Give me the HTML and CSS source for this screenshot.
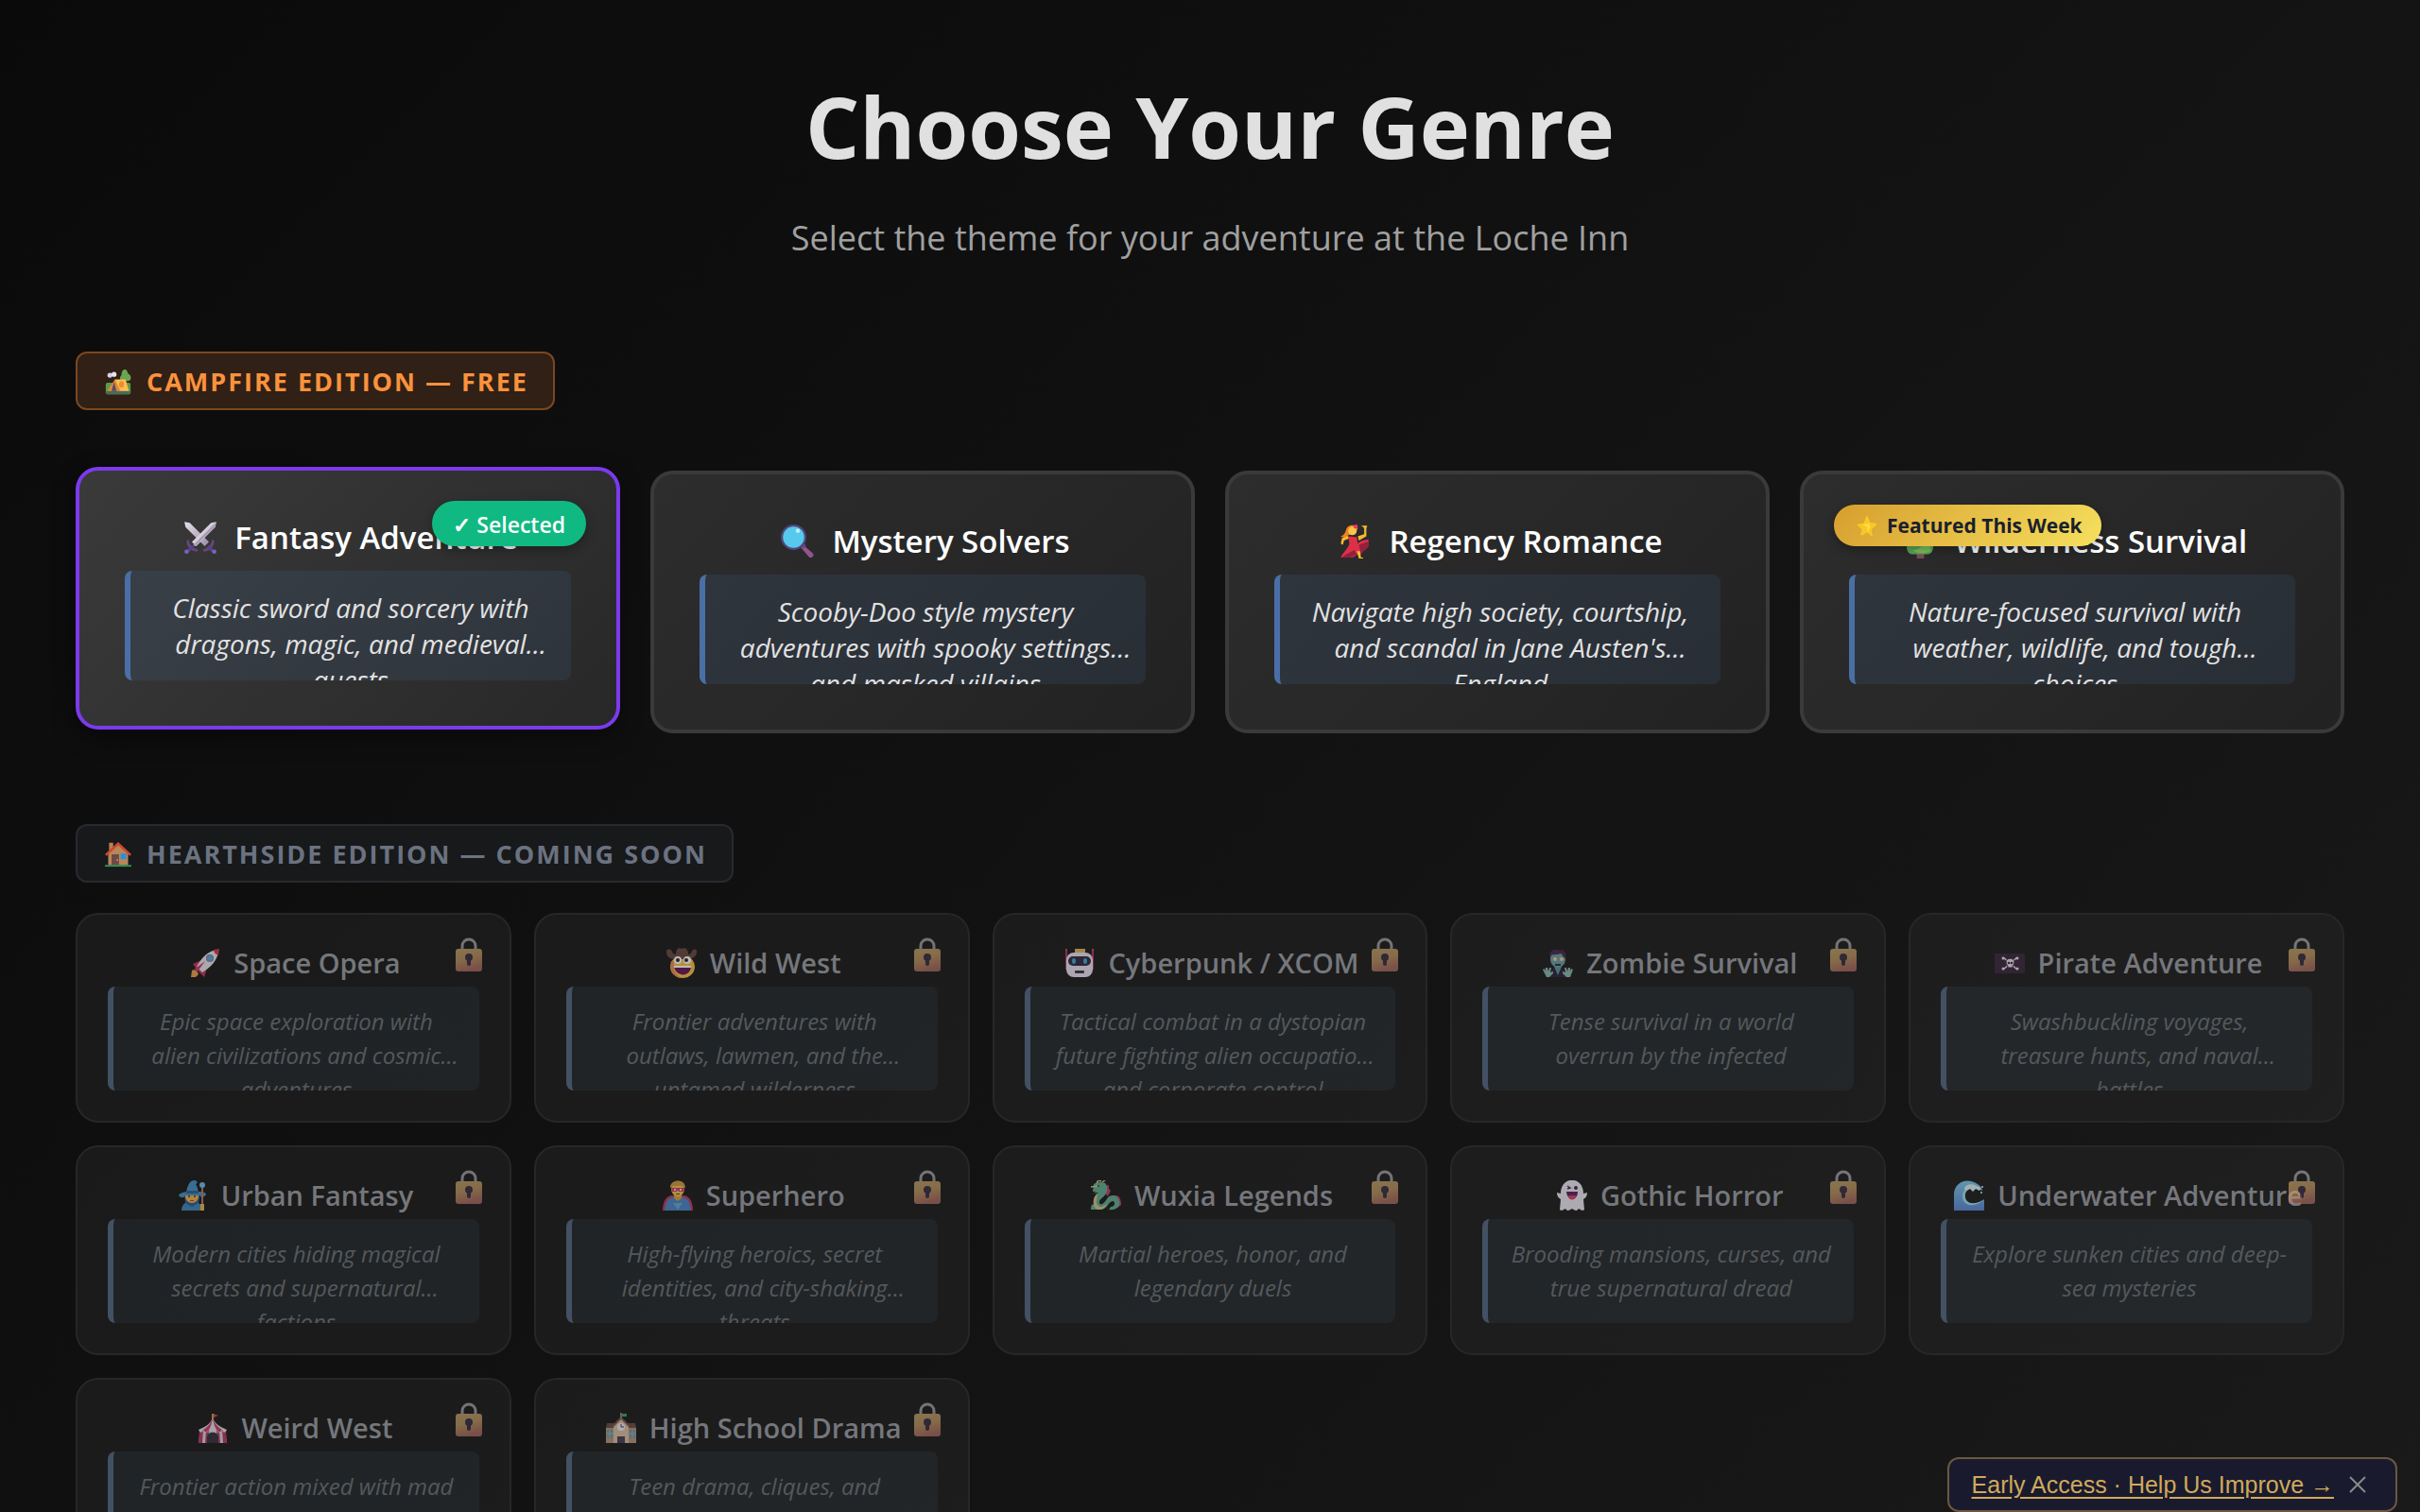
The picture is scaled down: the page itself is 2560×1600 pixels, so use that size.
FILE: index.html
```html
<!DOCTYPE html>
<html lang="en">
<head>
    <meta charset="UTF-8">
    <meta name="viewport" content="width=device-width, initial-scale=1.0">
    <title>Choose Your Genre</title>
    <link rel="stylesheet" href="styles.css">
</head>
<body>
    <!-- Icon sprite -->
    <svg class="sprite" aria-hidden="true">
        <defs>
            <linearGradient id="gold" x1="0" y1="0" x2="0.3" y2="1">
                <stop offset="0" stop-color="#d0b070"/>
                <stop offset="0.5" stop-color="#cda066"/>
                <stop offset="1" stop-color="#b87468"/>
            </linearGradient>
            <linearGradient id="blade" x1="0" y1="0" x2="1" y2="1">
                <stop offset="0" stop-color="#e4dfe8"/>
                <stop offset="1" stop-color="#9a8ba6"/>
            </linearGradient>
            <linearGradient id="sea" x1="0" y1="0" x2="0" y2="1">
                <stop offset="0" stop-color="#7ccbe8"/>
                <stop offset="1" stop-color="#5c86d6"/>
            </linearGradient>
        </defs>
        <symbol id="camp" viewBox="0 0 32 32">
            <rect x="1" y="17" width="30" height="14" rx="2" fill="#5f9a4c"/>
            <rect x="1" y="27" width="30" height="4" rx="2" fill="#4b6b5c"/>
            <path d="M24 1c3 0 3 3 4 5 3 2 4 4 3 7-1 2-3 2-4 2h-5c-4 0-5-4-2-7 0-3 1-7 4-7z" fill="#6aa552"/>
            <path d="M24 14h2v5h-2z" fill="#7a5148"/>
            <circle cx="6" cy="8" r="3" fill="#d8d0e6"/>
            <circle cx="11" cy="7" r="3" fill="#e8e2f0"/>
            <path d="M12 13h13l4 14H17z" fill="#fbbf4e"/>
            <path d="M12 13l7 14H3z" fill="#e08a34"/>
            <path d="M11 16l3 11H8z" fill="#5a4a6a"/>
            <ellipse cx="20" cy="19" rx="3" ry="4" fill="#f08a3c"/>
        </symbol>
        <symbol id="house" viewBox="0 0 32 32">
            <path d="M5 2h5v12H5z" fill="#b98252"/>
            <path d="M4 15L16 4l12 11v14H4z" fill="#b9855a"/>
            <path d="M0 16L16 1l16 15-2 2L16 5 2 18z" fill="#d0472f"/>
            <path d="M8 16h9v13H8z" fill="#6e4a46"/>
            <circle cx="15" cy="23" r="1" fill="#c49a6a"/>
            <path d="M19 15h7v7h-7z" fill="#2f8fd0"/>
            <path d="M0 29h32v2H0z" fill="#2f9e5b"/>
        </symbol>
        <symbol id="swords" viewBox="0 0 32 32">
            <path d="M1 1l5 1 18 18-4 4L2 6z" fill="url(#blade)"/>
            <path d="M31 1l-5 1L8 20l4 4L30 6z" fill="#d5cfdb"/>
            <path d="M30 2L9 23l2 1L30 6z" fill="#a89bb2"/>
            <path d="M5 17c0 5 4 9 9 10l-1 2c-5 0-10-4-10-10zM27 17c0 5-4 9-9 10l1 2c5 0 10-4 10-10z" fill="#66467c"/>
            <path d="M8 23l2 2-5 5-2-2zM24 23l-2 2 5 5 2-2z" fill="#58408c"/>
            <circle cx="3" cy="29" r="2" fill="#7766bb"/>
            <circle cx="29" cy="29" r="2" fill="#7766bb"/>
        </symbol>
        <symbol id="glass" viewBox="0 0 32 32">
            <path d="M21 19l9 8c2 2-1 5-3 4l-8-9z" fill="#92558f"/>
            <path d="M18 19l3-2 3 3-3 3z" fill="#6b4587"/>
            <circle cx="12" cy="12" r="12" fill="#50477d"/>
            <circle cx="12" cy="12" r="10" fill="#57c9ed"/>
            <ellipse cx="16" cy="6" rx="2" ry="2" fill="#bdeeff"/>
        </symbol>
        <symbol id="dancer" viewBox="0 0 32 32">
            <path d="M19 11l6-2V3l-3-2 5 0v10l-7 4z" fill="#f6b92f"/>
            <path d="M24 2l4-1-2 4z" fill="#f6b92f"/>
            <path d="M9 10l-5 3-1 5 2 1 1-4 5-2z" fill="#f6b92f"/>
            <path d="M8 5c1-5 9-6 11-1l-4 5-5 1c-2 2-5 3-7 1 3-1 4-3 5-6z" fill="#ef8220"/>
            <circle cx="14" cy="6" r="4" fill="#fbc547"/>
            <circle cx="17" cy="2" r="2" fill="#ec3a64"/>
            <path d="M10 11l8 1 1 6c4-4 7-3 10-4v6c-3 4-5 4-7 8-4-2-5 3-9 3H3c2-5 7-8 8-13z" fill="#dd3048"/>
            <path d="M20 19l9-3v5c-3 3-5 4-7 7zM8 28l8-4 2 4-6 3H4z" fill="#94203d"/>
            <path d="M18 25h3l1 6h2v1h-4z" fill="#f6b92f"/>
        </symbol>
        <symbol id="tree" viewBox="0 0 32 32">
            <path d="M13 25h7v7h-7z" fill="#7d4b58"/>
            <path d="M16 0c4 0 7 5 6 8 4 2 5 5 4 8 3 2 3 5 2 8-1 3-3 4-5 4H9c-2 0-4-1-5-4-1-3 0-6 2-8-1-3 0-6 4-8-1-3 2-8 6-8z" fill="#5da457"/>
            <path d="M19 17c5 0 8 4 7 8-7 3-14 2-17-1 5 0 9-2 10-7z" fill="#7cc05e"/>
        </symbol>
        <symbol id="star" viewBox="0 0 32 32">
            <path d="M16 1c2 0 3 8 5 10s10 1 10 3-7 6-8 8 3 9 1 10-6-5-8-5-7 6-9 4 2-7 1-9-7-5-7-7 8-1 10-3 3-11 5-11z" fill="#fbc725"/>
            <path d="M16 3l3 10-10 2 8 3-1 9 5-8z" fill="#fee04b"/>
        </symbol>
        <symbol id="rocket" viewBox="0 0 32 32">
            <path d="M2 24c3-2 6 1 7 4l-3 3H1z" fill="#f0a14e"/>
            <path d="M3 17l9-4 5 12-2 6-4-4-4-4z" fill="#c1345d"/>
            <path d="M30 2c0 8-5 17-17 24l-6-6C13 9 21 2 30 2z" fill="#e9e4ee"/>
            <path d="M25 2l6-1-1 7c-3-1-5-3-5-6z" fill="#cc3c59"/>
            <path d="M4 23l12-9-8 11z" fill="#cb3d6e"/>
            <circle cx="21" cy="11" r="4" fill="#7d7896"/>
            <circle cx="21" cy="11" r="3" fill="#5ba7d8"/>
        </symbol>
        <symbol id="cowboy" viewBox="0 0 32 32">
            <ellipse cx="17" cy="20" rx="13" ry="12" fill="#f5c24a"/>
            <path d="M5 14c-2 8 1 16 10 18C9 27 6 22 8 14z" fill="#e58a63"/>
            <path d="M0 3c2-3 6-1 7 3l3 1C10 1 13-1 16 1c4-2 7 0 7 6l3-1c1-4 4-6 6-3 1 5-4 9-8 9H8C3 12-1 8 0 3z" fill="#69493f"/>
            <circle cx="12" cy="13" r="4" fill="#fff"/>
            <circle cx="22" cy="13" r="4" fill="#fff"/>
            <circle cx="12" cy="13" r="2" fill="#30232c"/>
            <circle cx="21" cy="13" r="2" fill="#30232c"/>
            <path d="M8 19h18c0 13-17 12-18 0z" fill="#6d1554"/>
            <path d="M8 19h18v2H8z" fill="#fff"/>
        </symbol>
        <symbol id="robot" viewBox="0 0 32 32">
            <path d="M1 2h2v21H1zM29 2h2v21h-2z" fill="#b2355c"/>
            <circle cx="2" cy="2" r="1" fill="#e0557a"/>
            <circle cx="30" cy="2" r="1" fill="#e0557a"/>
            <path d="M11 1h11v4H11z" fill="#ddb55c"/>
            <rect x="2" y="5" width="28" height="26" rx="8" fill="#e9e1ef"/>
            <rect x="4" y="9" width="24" height="10" rx="5" fill="#332b47"/>
            <ellipse cx="10" cy="14" rx="2" ry="3" fill="#42a5d0"/>
            <ellipse cx="22" cy="14" rx="2" ry="3" fill="#42a5d0"/>
            <rect x="11" y="24" width="10" height="3" rx="1" fill="#403650"/>
        </symbol>
        <symbol id="zombie" viewBox="0 0 32 32">
            <path d="M8 24c4-4 12-4 16 0l2 7H6z" fill="#2c2340"/>
            <path d="M12 20h8l-4 9z" fill="#5d9197"/>
            <ellipse cx="16" cy="12" rx="8" ry="9" fill="#6b9ea5"/>
            <path d="M7 9c0-6 6-9 12-6l3-3-1 3c4 1 4 5 3 8-3-1-3-4-5-5-5 2-9 0-12 3z" fill="#45294e"/>
            <circle cx="13" cy="12" r="2" fill="#f2c98f"/>
            <circle cx="20" cy="12" r="2" fill="#f2c98f"/>
            <path d="M13 17h6v2h-6z" fill="#2b3340"/>
            <path d="M0 23l2-1 1 3v-4h2l1 4 1-4h2l-1 5 3-1v2l-4 4H4zM32 23l-2-1-1 3v-4h-2l-1 4-1-4h-2l1 5-3-1v2l4 4h4z" fill="#88b9ae"/>
        </symbol>
        <symbol id="pirate" viewBox="0 0 32 32">
            <path d="M0 6h32v21H0z" fill="#3b2740"/>
            <path d="M9 10l15 13M24 10L9 23" stroke="#e5dfe9" stroke-width="1.500"/>
            <circle cx="9" cy="11" r="1.500" fill="#e5dfe9"/>
            <circle cx="24" cy="11" r="1.500" fill="#e5dfe9"/>
            <circle cx="9" cy="22" r="1.500" fill="#e5dfe9"/>
            <circle cx="24" cy="22" r="1.500" fill="#e5dfe9"/>
            <path d="M12 15c0-5 9-5 9 0 0 3-2 3-2 6h-5c0-3-2-3-2-6z" fill="#e5dfe9" stroke="#3b2740" stroke-width="1"/>
            <circle cx="15" cy="16" r="1.300" fill="#3b2740"/>
            <circle cx="18" cy="16" r="1.300" fill="#3b2740"/>
        </symbol>
        <symbol id="mage" viewBox="0 0 32 32">
            <path d="M4 32c0-7 5-10 11-10s11 3 11 10z" fill="#4387b4"/>
            <path d="M7 14h17l-2 10-7 4-7-4z" fill="#2e5f9c"/>
            <ellipse cx="15" cy="17" rx="7" ry="7" fill="#f0b24c"/>
            <path d="M9 12C11 5 12 1 17 0c4 0 5 3 2 4 2 3 2 5 3 8 5 0 8 1 8 3-3 4-6 4-6 1H8c-1 3-5 3-7 0 1-2 3-3 8-4z" fill="#4592c4"/>
            <path d="M9 11h13v3H9z" fill="#31669b"/>
            <circle cx="12" cy="17" r="1" fill="#483043"/>
            <circle cx="18" cy="17" r="1" fill="#483043"/>
            <path d="M13 21h4v1h-4z" fill="#9b5043"/>
            <path d="M25 6h2v26h-2z" fill="#bf765b"/>
            <circle cx="26" cy="5" r="3" fill="#6fbde8"/>
            <path d="M24 25h4v7h-4z" fill="#e5b74e"/>
        </symbol>
        <symbol id="hero" viewBox="0 0 32 32">
            <path d="M0 32c0-10 4-15 9-16h14c5 1 9 6 9 16z" fill="#c23a5d"/>
            <path d="M2 32c1-9 3-13 9-14h10c6 1 8 5 9 14z" fill="#4a86c6"/>
            <path d="M11 24h10l-5 7z" fill="#6ba6d8"/>
            <path d="M12 14h8v5l-4 3-4-3z" fill="#dca23f"/>
            <ellipse cx="16" cy="9" rx="7" ry="8" fill="#efc352"/>
            <path d="M8 8c-1-9 16-11 16 0-3-1-4-3-8-2-3 0-6 0-8 2z" fill="#cf9c43"/>
            <path d="M9 8h14l-1 4h-5l-1-2-1 2h-5z" fill="#d23f66"/>
            <circle cx="13" cy="10" r="1" fill="#fff"/>
            <circle cx="19" cy="10" r="1" fill="#fff"/>
            <path d="M14 14h4v1h-4z" fill="#7c3e38"/>
        </symbol>
        <symbol id="dragon" viewBox="0 0 32 32">
            <path d="M14 6l5-1v4l2 2-3 6-3-3zM22 17c6-3 10 0 10 9l-4 3V21z" fill="#bd3f74"/>
            <path d="M2 12l1-8c3-2 8-3 12-1 3 3 3 7 1 11-3 5-8 6-7 10 2 4 6-1 9-6 4-4 11-2 12 4 2 6-4 10-11 9l2-3c5 0 5-6 2-6-4 0-6 9-12 9H0c0-5 1-5 3-6-1-5 1-9 5-12l-6 1 4-2z" fill="#62ae91"/>
            <path d="M3 25c-1-5 1-9 4-11l-1 7c-1 4 2 8 6 7l5-3c-2 4-5 6-8 6s-6-2-6-6z" fill="#d5c086"/>
            <path d="M6 3l2-3 3 1M12 2l3-2M0 7l7-1" stroke="#dcc588" stroke-width="1.500" fill="none"/>
            <circle cx="8" cy="6" r="1" fill="#2b3c40"/>
        </symbol>
        <symbol id="ghost" viewBox="0 0 32 32">
            <path d="M4 14C4-5 28-5 28 14l4-1c0 4-2 6-4 7l1 11c-2 2-4 0-6-1-2 3-4 2-7 0-3 2-5 3-7 0-2 1-4 3-6 1l1-11c-2-1-4-3-4-7z" fill="#ece6f2"/>
            <path d="M11 6l3 2-3 1" stroke="#3c2d48" stroke-width="1.500" fill="none"/>
            <circle cx="20" cy="8" r="2" fill="#3c2d48"/>
            <path d="M10 12h12c0 10-11 11-12 0z" fill="#612060"/>
            <path d="M12 16h8c0 6-8 6-8 0z" fill="#d44166"/>
        </symbol>
        <symbol id="wave" viewBox="0 0 32 32">
            <path d="M0 32V15C0 2 14-4 25 4c3 2 5 4 5 7-3-1-6-3-11-3-9 0-11 11-4 16 6 3 12-1 17-4v12z" fill="url(#sea)"/>
            <path d="M9 17c0-9 8-14 17-9-9-1-15 3-14 10 1 6 8 9 19 3-10 9-22 6-22-4z" fill="#9fdcf1"/>
            <path d="M11 9c1-5 8-6 13-3 4 1 5 3 3 5l-4-2-3 3-3-3-4 2z" fill="#d9f1f7"/>
            <circle cx="30" cy="7" r="1" fill="#d9f1f7"/>
            <circle cx="29" cy="13" r="1" fill="#d9f1f7"/>
        </symbol>
        <symbol id="circus" viewBox="0 0 32 32">
            <path d="M15 1h2v7h-2z" fill="#d69d47"/>
            <path d="M17 1l5 2-5 2z" fill="#ca3f61"/>
            <path d="M3 17h26l2 15H1z" fill="#d9d2df"/>
            <path d="M2 18h4l-1 14H1zM26 18h4l1 14h-4zM9 18h3l-1 14H8zM20 18h3l1 14h-3z" fill="#b63a63"/>
            <path d="M16 6c3 6 8 9 15 12-2 4-4 3-5 0-3 4-5 3-6 0-2 3-6 3-8 0-1 3-3 4-6 0-1 3-3 4-5 0C8 15 13 12 16 6z" fill="#e3dce9"/>
            <path d="M16 6c-1 5-2 9-4 12-2 3-4 3-6 0 5-3 8-7 10-12zM16 6c1 5 2 9 4 12 2 3 4 3 6 0-5-3-8-7-10-12z" fill="#cc4265"/>
            <path d="M10 32V26c0-7 12-7 12 0v6z" fill="#3a3042"/>
        </symbol>
        <symbol id="school" viewBox="0 0 32 32">
            <path d="M0 15h32v17H0z" fill="#b99378"/>
            <path d="M1 11h30l1 5H0z" fill="#6a4b46"/>
            <path d="M8 14l8-8 8 8v18H8z" fill="#d9bfa4"/>
            <path d="M6 14L16 4l10 10-2 1-8-8-8 8z" fill="#7b5750"/>
            <path d="M15 0h2v6h-2z" fill="#8b7a7a"/>
            <path d="M17 1h5v3h-5z" fill="#3f9f6a"/>
            <circle cx="16" cy="15" r="4" fill="#eee8ef"/>
            <path d="M16 12v3h3" stroke="#4b3c4b" stroke-width="1" fill="none"/>
            <path d="M1 18h6v9H1zM25 18h6v9h-6z" fill="#5d9db5"/>
            <path d="M4 18v9M1 22h6M28 18v9M25 22h6" stroke="#c7a488" stroke-width="1"/>
            <path d="M12 25h8v7h-8z" fill="#4a3f56"/>
        </symbol>
        <symbol id="lock" viewBox="0 0 28 36">
            <path d="M7 14V9a7 7 0 0 1 14 0v5" stroke="#b0adb6" stroke-width="3" fill="none"/>
            <rect x="0" y="12" width="28" height="24" rx="3" fill="url(#gold)"/>
            <circle cx="14" cy="21" r="4" fill="#3d3148"/>
            <path d="M12 21h4v7a2 2 0 0 1-4 0z" fill="#3d3148"/>
        </symbol>
    </svg>

    <header class="page-header">
        <h1>Choose Your Genre</h1>
        <p>Select the theme for your adventure at the Loche Inn</p>
    </header>

    <main>
        <section class="tier">
            <h2 class="tier-label tier-free"><svg class="tier-icon"><use href="#camp"/></svg>Campfire Edition — Free</h2>
            <div class="genre-grid">
                <button class="genre-card selected">
                    <span class="badge badge-selected">✓ Selected</span>
                    <span class="genre-name"><svg class="genre-icon"><use href="#swords"/></svg>Fantasy Adventure</span>
                    <span class="genre-desc">Classic sword and sorcery with dragons, magic, and medieval quests</span>
                </button>
                <button class="genre-card">
                    <span class="genre-name"><svg class="genre-icon"><use href="#glass"/></svg>Mystery Solvers</span>
                    <span class="genre-desc">Scooby-Doo style mystery adventures with spooky settings and masked villains</span>
                </button>
                <button class="genre-card">
                    <span class="genre-name"><svg class="genre-icon"><use href="#dancer"/></svg>Regency Romance</span>
                    <span class="genre-desc">Navigate high society, courtship, and scandal in Jane Austen's England</span>
                </button>
                <button class="genre-card">
                    <span class="badge badge-featured"><svg class="badge-icon"><use href="#star"/></svg>Featured This Week</span>
                    <span class="genre-name"><svg class="genre-icon"><use href="#tree"/></svg>Wilderness Survival</span>
                    <span class="genre-desc">Nature-focused survival with weather, wildlife, and tough choices</span>
                </button>
            </div>
        </section>

        <section class="tier tier-soon">
            <h2 class="tier-label tier-locked"><svg class="tier-icon"><use href="#house"/></svg>Hearthside Edition — Coming Soon</h2>
            <div class="locked-grid">
                <button class="genre-card locked" disabled>
                    <svg class="lock"><use href="#lock"/></svg>
                    <span class="genre-name"><svg class="genre-icon"><use href="#rocket"/></svg>Space Opera</span>
                    <span class="genre-desc">Epic space exploration with alien civilizations and cosmic adventures</span>
                </button>
                <button class="genre-card locked" disabled>
                    <svg class="lock"><use href="#lock"/></svg>
                    <span class="genre-name"><svg class="genre-icon"><use href="#cowboy"/></svg>Wild West</span>
                    <span class="genre-desc">Frontier adventures with outlaws, lawmen, and the untamed wilderness</span>
                </button>
                <button class="genre-card locked" disabled>
                    <svg class="lock"><use href="#lock"/></svg>
                    <span class="genre-name"><svg class="genre-icon"><use href="#robot"/></svg>Cyberpunk / XCOM</span>
                    <span class="genre-desc">Tactical combat in a dystopian future fighting alien occupation and corporate control</span>
                </button>
                <button class="genre-card locked" disabled>
                    <svg class="lock"><use href="#lock"/></svg>
                    <span class="genre-name"><svg class="genre-icon"><use href="#zombie"/></svg>Zombie Survival</span>
                    <span class="genre-desc">Tense survival in a world overrun by the infected</span>
                </button>
                <button class="genre-card locked" disabled>
                    <svg class="lock"><use href="#lock"/></svg>
                    <span class="genre-name"><svg class="genre-icon"><use href="#pirate"/></svg>Pirate Adventure</span>
                    <span class="genre-desc">Swashbuckling voyages, treasure hunts, and naval battles</span>
                </button>
                <button class="genre-card locked" disabled>
                    <svg class="lock"><use href="#lock"/></svg>
                    <span class="genre-name"><svg class="genre-icon"><use href="#mage"/></svg>Urban Fantasy</span>
                    <span class="genre-desc">Modern cities hiding magical secrets and supernatural factions</span>
                </button>
                <button class="genre-card locked" disabled>
                    <svg class="lock"><use href="#lock"/></svg>
                    <span class="genre-name"><svg class="genre-icon"><use href="#hero"/></svg>Superhero</span>
                    <span class="genre-desc">High-flying heroics, secret identities, and city-shaking threats</span>
                </button>
                <button class="genre-card locked" disabled>
                    <svg class="lock"><use href="#lock"/></svg>
                    <span class="genre-name"><svg class="genre-icon"><use href="#dragon"/></svg>Wuxia Legends</span>
                    <span class="genre-desc">Martial heroes, honor, and legendary duels</span>
                </button>
                <button class="genre-card locked" disabled>
                    <svg class="lock"><use href="#lock"/></svg>
                    <span class="genre-name"><svg class="genre-icon"><use href="#ghost"/></svg>Gothic Horror</span>
                    <span class="genre-desc">Brooding mansions, curses, and true supernatural dread</span>
                </button>
                <button class="genre-card locked" disabled>
                    <svg class="lock"><use href="#lock"/></svg>
                    <span class="genre-name"><svg class="genre-icon"><use href="#wave"/></svg>Underwater Adventure</span>
                    <span class="genre-desc">Explore sunken cities and deep-sea mysteries</span>
                </button>
                <button class="genre-card locked" disabled>
                    <svg class="lock"><use href="#lock"/></svg>
                    <span class="genre-name"><svg class="genre-icon"><use href="#circus"/></svg>Weird West</span>
                    <span class="genre-desc">Frontier action mixed with mad science and the occult</span>
                </button>
                <button class="genre-card locked" disabled>
                    <svg class="lock"><use href="#lock"/></svg>
                    <span class="genre-name"><svg class="genre-icon"><use href="#school"/></svg>High School Drama</span>
                    <span class="genre-desc">Teen drama, cliques, and coming-of-age challenges</span>
                </button>
            </div>
        </section>
    </main>

    <div class="feedback">
        <a href="#feedback">Early Access · Help Us Improve →</a>
        <button class="feedback-close" aria-label="Close">
            <svg viewBox="0 0 18 18"><path d="M1 1l16 16M17 1L1 17" stroke="#8a8a8a" stroke-width="2"/></svg>
        </button>
    </div>
</body>
</html>
```

FILE: styles.css
```css
* {
    box-sizing: border-box;
}

body {
    margin: 0;
    padding: 66px 80px 64px;
    min-height: 100vh;
    font-family: "Open Sans", "Noto Sans", sans-serif;
    color: #e0e0e0;
    background: linear-gradient(135deg, #0a0a0a 0%, #1a1a1a 100%);
}

.sprite {
    position: absolute;
    width: 0;
    height: 0;
}

/* Header */
.page-header {
    text-align: center;
    margin-bottom: 94px;
}

.page-header h1 {
    margin: 0 0 26px;
    font-size: 90px;
    line-height: 134px;
    font-weight: 700;
}

.page-header p {
    margin: 0;
    font-size: 36px;
    line-height: 52px;
    color: #a0a0a0;
}

/* Tiers */
.tier-soon {
    margin-top: 96px;
}

.tier-label {
    display: flex;
    align-items: center;
    gap: 16px;
    width: fit-content;
    margin: 0 0 64px;
    padding: 12px 26px 10px 29px;
    border: 2px solid;
    border-radius: 12px;
    font-size: 27px;
    line-height: 36px;
    font-weight: 700;
    letter-spacing: 2px;
    text-transform: uppercase;
}

.tier-free {
    color: #fb923c;
    background: #302015;
    border-color: #7a4820;
}

.tier-locked {
    margin-bottom: 32px;
    color: #6b7280;
    background: #17191b;
    border-color: #282a2e;
}

.tier-icon {
    width: 28px;
    height: 28px;
}

/* Cards */
.genre-grid {
    display: grid;
    grid-template-columns: repeat(4, 1fr);
    gap: 32px;
}

.locked-grid {
    display: grid;
    grid-template-columns: repeat(5, 1fr);
    gap: 24px;
}

.genre-card {
    position: relative;
    min-width: 0;
    padding: 48px;
    border: 4px solid #3a3a3a;
    border-radius: 24px;
    background: linear-gradient(135deg, #2d2d2d, #222222);
    color: #ffffff;
    font-family: inherit;
    text-align: center;
    cursor: pointer;
}

.genre-card.selected {
    border-color: #7c3aed;
    background: linear-gradient(135deg, #3a3a3a, #282828);
    box-shadow: 0 8px 24px rgba(0, 0, 0, 0.4);
    transform: translateY(-4px);
}

.genre-name {
    display: flex;
    align-items: center;
    justify-content: center;
    gap: 18px;
    margin-bottom: 12px;
    font-size: 33px;
    line-height: 46px;
    font-weight: 600;
    white-space: nowrap;
}

.genre-icon {
    flex: none;
    width: 36px;
    height: 36px;
    margin-left: 6px;
}

.genre-desc {
    display: -webkit-box;
    -webkit-box-orient: vertical;
    -webkit-line-clamp: 2;
    overflow: hidden;
    padding: 20px;
    border-left: 6px solid #4a6fa5;
    border-radius: 8px;
    background: rgba(74, 111, 165, 0.15);
    color: #e2e2e2;
    font-size: 28px;
    line-height: 38px;
    font-style: italic;
}

/* Locked cards */
.genre-card.locked {
    padding: 32px;
    border: 2px solid #272727;
    background: rgba(38, 38, 38, 0.5);
    color: #75777c;
    cursor: not-allowed;
}

.locked .genre-name {
    gap: 14px;
    margin-bottom: 6px;
    font-size: 29px;
    line-height: 38px;
}

.locked .genre-icon {
    width: 32px;
    height: 32px;
    margin-left: 4px;
    opacity: 0.7;
}

.locked .genre-desc {
    padding: 19px 22px;
    border-left-color: #435164;
    background: rgba(74, 111, 135, 0.12);
    color: #55585b;
    font-size: 24px;
    line-height: 36px;
}

.lock {
    position: absolute;
    top: 24px;
    right: 29px;
    width: 28px;
    height: 36px;
    opacity: 0.6;
}

/* Badges */
.badge {
    position: absolute;
    top: 32px;
    display: flex;
    align-items: center;
    border-radius: 24px;
    font-weight: 600;
    box-shadow: 0 4px 12px rgba(0, 0, 0, 0.3);
}

.badge-selected {
    right: 32px;
    padding: 9px 22px 7px;
    background: #10b981;
    color: #ffffff;
    font-size: 23px;
    line-height: 32px;
}

.badge-featured {
    left: 32px;
    gap: 10px;
    padding: 6px 20px 6px 24px;
    background: linear-gradient(135deg, #d69e2e, #f6e05e);
    color: #1a202c;
    font-size: 21px;
    line-height: 32px;
    font-weight: 700;
}

.badge-icon {
    width: 22px;
    height: 22px;
}

/* Feedback bar */
.feedback {
    position: fixed;
    right: 24px;
    bottom: 0;
    display: flex;
    align-items: center;
    gap: 16px;
    padding: 12px 31px 12px 24px;
    border: 2px solid #6b5740;
    border-radius: 12px;
    background: #1a1a2e;
    font-family: "Liberation Sans", Arial, sans-serif;
    font-size: 25px;
    line-height: 30px;
}

.feedback a {
    color: #d0aa5c;
    text-underline-offset: 4px;
}

.feedback-close {
    display: flex;
    padding: 0;
    border: none;
    background: none;
    cursor: pointer;
}

.feedback-close svg {
    width: 18px;
    height: 18px;
}
```
